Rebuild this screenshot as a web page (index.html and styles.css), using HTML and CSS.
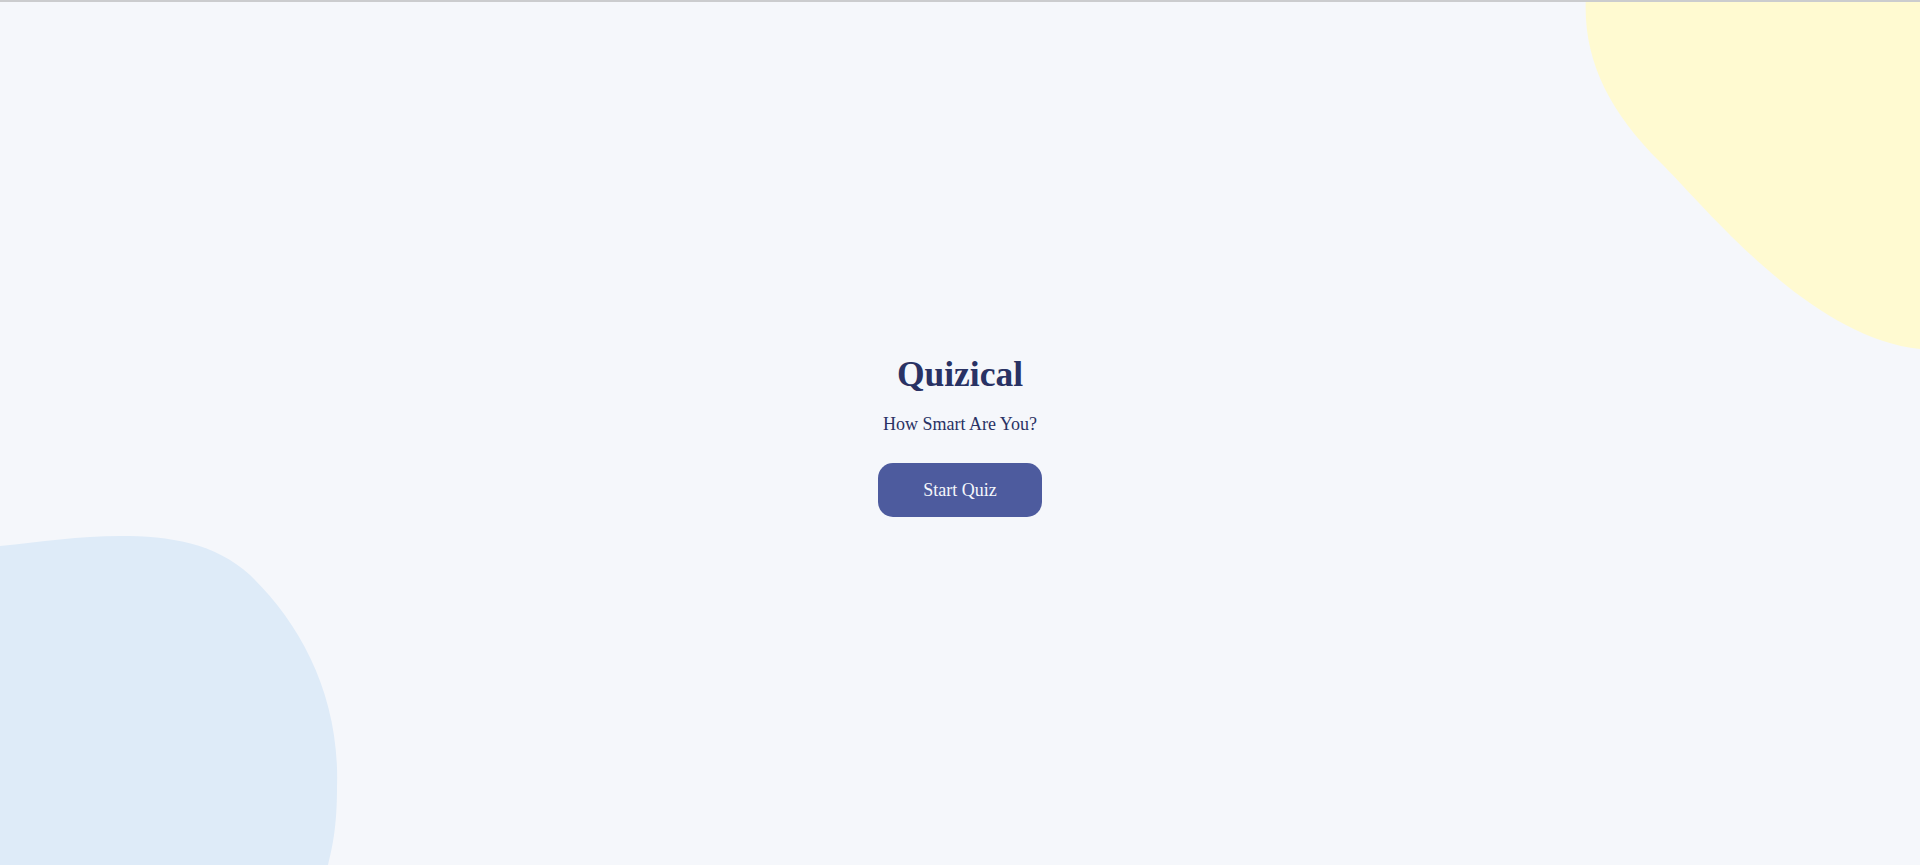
FILE: index.html
```html
<!DOCTYPE html>
<html lang="en">
<head>
<meta charset="utf-8">
<title>Quizical</title>
<link rel="stylesheet" href="styles.css">
</head>
<body>
<div class="page">
  <svg class="blob blob-yellow" width="360" height="350" viewBox="0 0 360 350" aria-hidden="true">
    <path d="M25.7 0 C24 60 50 110 100 160 C150 210 250 335 360 347 L360 0 Z" fill="#FFFAD1"/>
  </svg>
  <svg class="blob blob-blue" width="340" height="330" viewBox="0 0 340 330" aria-hidden="true">
    <path d="M0 11 C40 7 80 1 120 1 C170 1 215 8 250 40 C300 88 340 160 337 252 C337 290 333 310 328 330 L0 330 Z" fill="#DEEBF8"/>
  </svg>
  <main class="intro">
    <h1 class="title">Quizical</h1>
    <p class="subtitle">How Smart Are You?</p>
    <button class="start-btn" type="button">Start Quiz</button>
  </main>
</div>
</body>
</html>
```
FILE: styles.css
```css
html, body {
  margin: 0;
  padding: 0;
}
body {
  background: #F5F7FB;
  font-family: "Liberation Serif", "Times New Roman", serif;
  color: #293264;
}
.page {
  position: relative;
  height: 100vh;
  box-sizing: border-box;
  border-top: 2px solid #CBCCCE;
  overflow: hidden;
  display: flex;
  align-items: center;
  justify-content: center;
}
.blob {
  position: absolute;
  display: block;
}
.blob-yellow {
  top: 0;
  right: 0;
}
.blob-blue {
  left: 0;
  bottom: 0;
}
.intro {
  position: relative;
  display: flex;
  flex-direction: column;
  align-items: center;
  padding-top: 3px;
}
.title {
  margin: 0;
  font-size: 35.5px;
  line-height: 40px;
  font-weight: bold;
  color: #293264;
}
.subtitle {
  margin: 20.5px 0 0;
  font-size: 18px;
  line-height: 20px;
  color: #293264;
}
.start-btn {
  margin-top: 28.5px;
  width: 164px;
  padding: 17px 0;
  border: none;
  border-radius: 15px;
  background: #4D5B9E;
  color: #F5F7FB;
  font-family: "Liberation Serif", "Times New Roman", serif;
  font-size: 18px;
  line-height: 20px;
  cursor: pointer;
}
```
